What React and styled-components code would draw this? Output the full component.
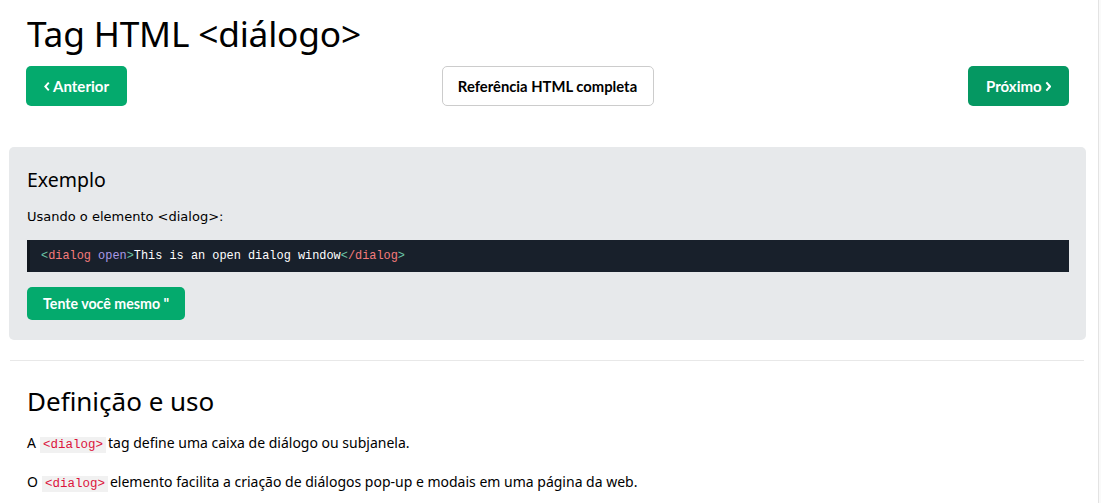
import React from 'react';
import styled, { createGlobalStyle } from 'styled-components';

const GlobalStyle = createGlobalStyle`
  html, body {
    margin: 0;
    padding: 0;
    background: #fafafa;
  }
  body {
    font-family: "DejaVu Sans", Verdana, sans-serif;
    color: #000;
  }
`;

// 흰 본문 영역, 오른쪽에 얇은 경계선
const Main = styled.div`
  width: 1099px;
  min-height: 503px;
  background: #fff;
  border-right: 1px solid #e3e3e3;
  box-sizing: border-box;
  padding: 0 29px 0 27px;
`;

const Title = styled.h1`
  margin: 0;
  padding-top: 10px;
  font-family: "Noto Sans", "Open Sans", sans-serif;
  font-weight: 400;
  font-size: 35.3px;
  line-height: 46px;
  letter-spacing: -0.2px;
`;

const NavRow = styled.div`
  display: flex;
  justify-content: space-between;
  align-items: center;
  margin: 10px 0 0 -1px;
`;

const NavButton = styled.a`
  display: inline-flex;
  align-items: center;
  justify-content: center;
  gap: 3px;
  height: 40px;
  box-sizing: border-box;
  padding: 0 18px;
  border-radius: 5px;
  font-family: "Lato", "Open Sans", sans-serif;
  font-weight: 700;
  font-size: ${({ $light }) => ($light ? '14.8px' : '15px')};
  white-space: nowrap;
  text-decoration: none;
  color: ${({ $light }) => ($light ? '#000' : '#fff')};
  background: ${({ $bg }) => $bg};
  border: ${({ $light }) => ($light ? '1px solid #ccc' : 'none')};
  width: ${({ $w }) => $w}px;
`;

const Chevron = ({ dir }) => (
  <svg width="7" height="11" viewBox="0 0 7 11">
    <path
      d={dir === 'left' ? 'M5.5 1 L1.5 5.5 L5.5 10' : 'M1.5 1 L5.5 5.5 L1.5 10'}
      fill="none"
      stroke="currentColor"
      strokeWidth="2.2"
    />
  </svg>
);

// 회색 예제 박스
const ExampleBox = styled.div`
  margin: 41px -17px 0 -18px;
  padding: 18px 17px 20px 18px;
  background: #e7e9eb;
  border-radius: 5px;
`;

const BoxTitle = styled.h2`
  margin: 0;
  font-family: "Noto Sans", "Open Sans", sans-serif;
  font-weight: 400;
  font-size: 19.5px;
  line-height: 30px;
`;

const Lead = styled.p`
  margin: 13px 0 14px;
  font-size: 13px;
  line-height: 18px;
`;

const CodeBlock = styled.div`
  background: #18202b;
  border-left: 3px solid #10161e;
  padding: 0 11px;
  height: 32px;
  display: flex;
  align-items: center;
  font-family: "Liberation Mono", "DejaVu Sans Mono", monospace;
  font-size: 11.9px;
  color: #fff;
  white-space: pre;
`;

const Tok = styled.span`
  color: ${({ $c }) => $c};
`;

const TryButton = styled.a`
  display: inline-flex;
  align-items: center;
  height: 33px;
  margin-top: 15px;
  padding: 0 16px;
  background: #04aa6d;
  color: #fff;
  border-radius: 5px;
  font-family: "Lato", "Open Sans", sans-serif;
  font-weight: 700;
  font-size: 14.2px;
  text-decoration: none;
`;

const Divider = styled.hr`
  margin: 20px -15px 0 -17px;
  border: none;
  border-top: 1px solid #e8e8e8;
`;

const SectionTitle = styled.h2`
  margin: 20px 0 0;
  font-family: "Noto Sans", "Open Sans", sans-serif;
  font-weight: 400;
  font-size: 26px;
  line-height: 40px;
`;

const Para = styled.p`
  margin: ${({ $first }) => ($first ? '13px' : '19px')} 0 0;
  font-family: "Noto Sans", "Open Sans", sans-serif;
  font-size: 14px;
  line-height: 17px;
`;

const InlineCode = styled.code`
  font-family: "Liberation Mono", "DejaVu Sans Mono", monospace;
  font-size: 12.5px;
  color: crimson;
  background: #f1f1f1;
  padding: 1px 3px;
  margin: 0 2px 0 4px;
`;

const App = () => {
  return (
    <>
      <GlobalStyle />
      <Main>
        <Title>Tag HTML &lt;diálogo&gt;</Title>
        <NavRow>
          <NavButton href="#" $bg="#04aa6d" $w={101}>
            <Chevron dir="left" />
            Anterior
          </NavButton>
          <NavButton href="#" $bg="#fff" $light $w={212}>
            Referência HTML completa
          </NavButton>
          <NavButton href="#" $bg="#059862" $w={101}>
            Próximo
            <Chevron dir="right" />
          </NavButton>
        </NavRow>

        <ExampleBox>
          <BoxTitle>Exemplo</BoxTitle>
          <Lead>Usando o elemento &lt;dialog&gt;:</Lead>
          <CodeBlock>
            <Tok $c="#6ac4a6">&lt;</Tok>
            <Tok $c="#f47b7b">dialog</Tok>
            <Tok $c="#a99ae6"> open</Tok>
            <Tok $c="#6ac4a6">&gt;</Tok>
            This is an open dialog window
            <Tok $c="#6ac4a6">&lt;</Tok>
            <Tok $c="#f47b7b">/dialog</Tok>
            <Tok $c="#6ac4a6">&gt;</Tok>
          </CodeBlock>
          <TryButton href="#">Tente você mesmo "</TryButton>
        </ExampleBox>

        <Divider />

        <SectionTitle>Definição e uso</SectionTitle>
        <Para $first>
          A<InlineCode>&lt;dialog&gt;</InlineCode>tag define uma caixa de diálogo ou subjanela.
        </Para>
        <Para>
          O<InlineCode>&lt;dialog&gt;</InlineCode>elemento facilita a criação de diálogos pop-up e modais em uma página da web.
        </Para>
      </Main>
    </>
  );
};

export default App;
